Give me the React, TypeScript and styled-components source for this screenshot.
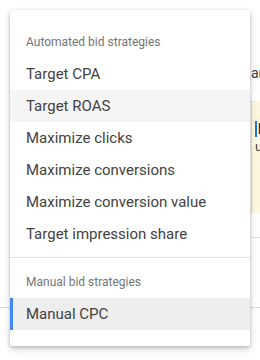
import React from "react";
import styled, { createGlobalStyle } from "styled-components";

const Global = createGlobalStyle`
  html, body { margin: 0; padding: 0; background: #fff; }
  body { font-family: Roboto, "Noto Sans", Arial, sans-serif; }
  * { box-sizing: border-box; }
`;

const Page = styled.div`
  position: relative;
  width: 260px;
  height: 360px;
  overflow: hidden;
  background: #fff;
`;

const BackSide = styled.div`
  display: flex;
  flex-direction: column;
  padding-left: 251px;
  padding-top: 64px;
  width: 400px;
`;

const BackText = styled.div`
  font-size: 14px;
  line-height: 18px;
  color: #3c4043;
  white-space: nowrap;
`;

const Notice = styled.div`
  margin-top: 19px;
  height: 112px;
  background: #fef7e0;
  border-left: 1px dotted #cfcfcf;
  padding: 20px 0 0 3px;
  display: flex;
  flex-direction: column;
  gap: 2px;
`;

const NoticeTitle = styled.div`
  font-size: 14px;
  font-weight: 700;
  color: #202124;
  white-space: nowrap;
  border-left: 2px solid #1a73e8;
  padding-left: 1px;
`;

const NoticeBody = styled.div`
  font-size: 13px;
  color: #3c4043;
  white-space: nowrap;
`;

const Rule = styled.div<{ $top: number }>`
  margin-top: ${(p) => p.$top}px;
  height: 1px;
  background: #dadce0;
`;

const FullRule = styled.div`
  position: absolute;
  left: 0;
  right: 0;
  top: 307px;
  height: 1px;
  background: #dadce0;
`;

const Menu = styled.div`
  position: absolute;
  top: 10px;
  left: 10px;
  width: 240px;
  background: #fff;
  border-radius: 2px;
  box-shadow: 0 2px 4px rgba(0, 0, 0, 0.2), 0 4px 10px rgba(0, 0, 0, 0.1),
    0 0 2px rgba(0, 0, 0, 0.1);
  padding: 16px 0 16px;
  display: flex;
  flex-direction: column;
`;

const GroupHeader = styled.div`
  height: 32px;
  display: flex;
  align-items: center;
  padding-left: 16px;
  font-size: 12px;
  color: #757575;
`;

const Item = styled.div<{ $hover?: boolean; $selected?: boolean }>`
  height: 32px;
  display: flex;
  align-items: center;
  padding-left: 16px;
  font-size: 15px;
  color: #424242;
  background: ${(p) => (p.$selected ? "#eeeeee" : p.$hover ? "#f5f5f5" : "transparent")};
  box-shadow: ${(p) => (p.$selected ? "inset 3px 0 0 #4285f4" : "none")};
`;

const Divider = styled.div`
  height: 1px;
  background: #e0e0e0;
  margin: 7px 0 8px;
`;

export default function App() {
  return (
    <Page>
      <Global />
      <BackSide>
        <BackText>and</BackText>
        <Notice>
          <NoticeTitle>le</NoticeTitle>
          <NoticeBody>us</NoticeBody>
        </Notice>
        <Rule $top={24} />
      </BackSide>
      <FullRule />
      <Menu>
        <GroupHeader>Automated bid strategies</GroupHeader>
        <Item>Target CPA</Item>
        <Item $hover>Target ROAS</Item>
        <Item>Maximize clicks</Item>
        <Item>Maximize conversions</Item>
        <Item>Maximize conversion value</Item>
        <Item>Target impression share</Item>
        <Divider />
        <GroupHeader>Manual bid strategies</GroupHeader>
        <Item $selected>Manual CPC</Item>
      </Menu>
    </Page>
  );
}
